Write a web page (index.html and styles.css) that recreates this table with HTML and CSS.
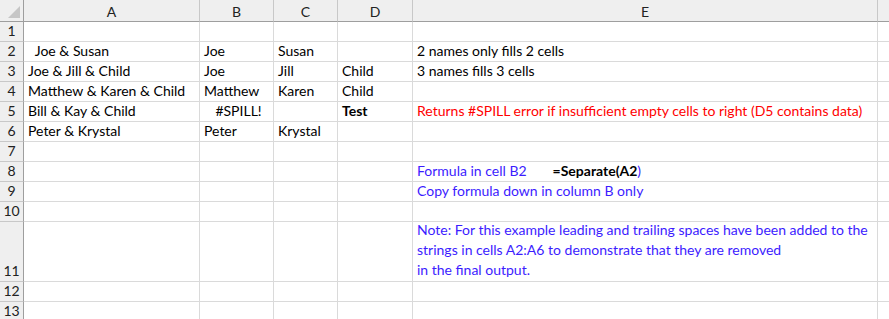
FILE: index.html
```html
<!DOCTYPE html>
<html>
<head>
<meta charset="utf-8">
<link rel="stylesheet" href="styles.css">
</head>
<body>
<div class="sheet">
  <div class="hd corner"><span class="tri"></span></div>
  <div class="hd col">A</div>
  <div class="hd col">B</div>
  <div class="hd col">C</div>
  <div class="hd col">D</div>
  <div class="hd col">E</div>
  <div class="hd col last"></div>

  <div class="rh">1</div><div class="c"></div><div class="c"></div><div class="c"></div><div class="c"></div><div class="c"></div><div class="c f"></div>

  <div class="rh">2</div><div class="c pre">  Joe &amp; Susan</div><div class="c">Joe</div><div class="c">Susan</div><div class="c"></div><div class="c">2 names only fills 2 cells</div><div class="c f"></div>

  <div class="rh">3</div><div class="c">Joe &amp; Jill &amp; Child</div><div class="c">Joe</div><div class="c">Jill</div><div class="c">Child</div><div class="c">3 names fills 3 cells</div><div class="c f"></div>

  <div class="rh">4</div><div class="c">Matthew &amp; Karen &amp; Child</div><div class="c">Matthew</div><div class="c">Karen</div><div class="c">Child</div><div class="c"></div><div class="c f"></div>

  <div class="rh">5</div><div class="c">Bill &amp; Kay &amp; Child</div><div class="c center">#SPILL!</div><div class="c"></div><div class="c bold">Test</div><div class="c red">Returns #SPILL error if insufficient empty cells to right (D5 contains data)</div><div class="c f"></div>

  <div class="rh">6</div><div class="c">Peter &amp; Krystal</div><div class="c">Peter</div><div class="c">Krystal</div><div class="c"></div><div class="c"></div><div class="c f"></div>

  <div class="rh">7</div><div class="c"></div><div class="c"></div><div class="c"></div><div class="c"></div><div class="c"></div><div class="c f"></div>

  <div class="rh">8</div><div class="c"></div><div class="c"></div><div class="c"></div><div class="c"></div><div class="c blue">Formula in cell B2<span class="fx"><b>=Separate(A2</b>)</span></div><div class="c f"></div>

  <div class="rh">9</div><div class="c"></div><div class="c"></div><div class="c"></div><div class="c"></div><div class="c blue">Copy formula down in column B only</div><div class="c f"></div>

  <div class="rh">10</div><div class="c"></div><div class="c"></div><div class="c"></div><div class="c"></div><div class="c"></div><div class="c f"></div>

  <div class="rh">11</div><div class="c"></div><div class="c"></div><div class="c"></div><div class="c"></div><div class="c blue note"><p>Note: For this example leading and trailing spaces have been added to the<br>strings in cells A2:A6 to demonstrate that they are removed<br>in the final output.</p></div><div class="c f"></div>

  <div class="rh">12</div><div class="c"></div><div class="c"></div><div class="c"></div><div class="c"></div><div class="c"></div><div class="c f"></div>

  <div class="rh">13</div><div class="c"></div><div class="c"></div><div class="c"></div><div class="c"></div><div class="c"></div><div class="c f"></div>
</div>
</body>
</html>
```

FILE: styles.css
```css
html, body {
  margin: 0;
  padding: 0;
  background: #ffffff;
}
.sheet {
  display: grid;
  grid-template-columns: 24px 176px 74px 64px 75px 465px 11px;
  grid-template-rows: 22px repeat(10, 20px) 60px 20px 20px;
  font-family: Lato, "Liberation Sans", sans-serif;
  font-size: 14px;
  color: #000;
  width: 889px;
  overflow: hidden;
}
.hd {
  background: #efefef;
  border-bottom: 1px solid #9e9e9e;
  border-right: 1px solid #c8c8c8;
  box-sizing: border-box;
  display: flex;
  align-items: center;
  justify-content: center;
  color: #222;
  padding-top: 1px;
}
.hd.corner {
  border-right: 1px solid #9e9e9e;
  position: relative;
}
.tri {
  position: absolute;
  right: 3px;
  bottom: 3px;
  width: 0;
  height: 0;
  border-left: 12px solid transparent;
  border-bottom: 12px solid #c6c6c6;
}
.hd.last {
  border-right: none;
}
.rh {
  background: #efefef;
  border-right: 1px solid #9e9e9e;
  border-bottom: 1px solid #c8c8c8;
  box-sizing: border-box;
  display: flex;
  align-items: flex-end;
  justify-content: center;
  color: #222;
  line-height: 18px;
  padding-bottom: 1px;
}
.c {
  border-right: 1px solid #dadada;
  border-bottom: 1px solid #dadada;
  box-sizing: border-box;
  display: flex;
  align-items: flex-end;
  padding: 0 0 1px 4px;
  line-height: 18px;
  white-space: nowrap;
  min-width: 0;
}
.c.f {
  border-right: none;
}
.pre {
  white-space: pre;
}
.center {
  justify-content: center;
}
.bold {
  font-weight: bold;
}
.red {
  color: #ff0000;
}
.blue {
  color: #3c1cff;
}
.fx {
  margin-left: 26px;
}
.fx b {
  color: #000;
}
.note p {
  margin: 0;
  line-height: 20px;
}
```
